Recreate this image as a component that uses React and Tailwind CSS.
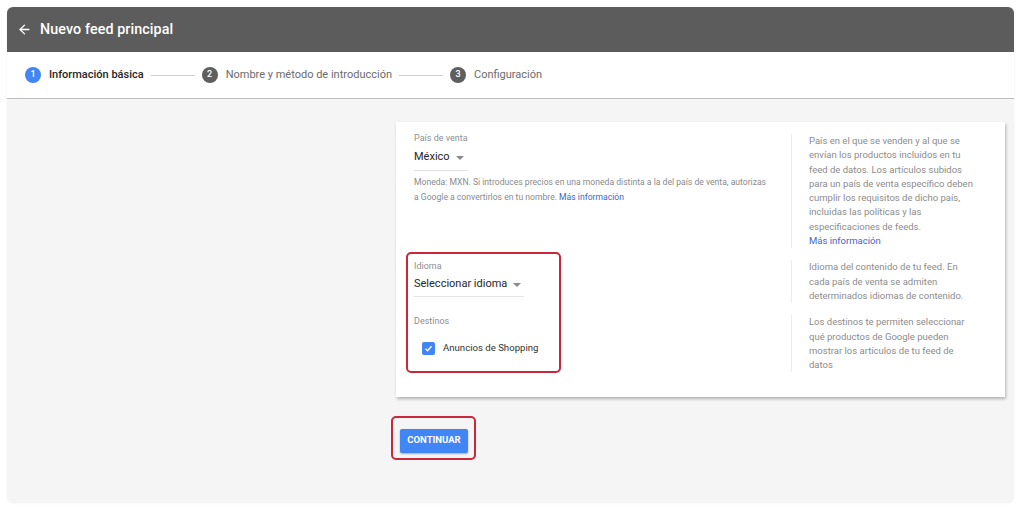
import { ArrowLeft } from 'lucide-react';

const steps = [
  { n: 1, label: 'Información básica', active: true },
  { n: 2, label: 'Nombre y método de introducción' },
  { n: 3, label: 'Configuración' },
];

const Caret = () => (
  <svg width="8" height="4" viewBox="0 0 8 4" className="ml-[6px] mt-[1px]">
    <path d="M0 0 L8 0 L4 4 Z" fill="#8a8a8a" />
  </svg>
);

const HelpBlock = ({ children }) => (
  <div className="border-l border-[#ececec] pl-[17px] pr-[26px] text-[9.5px] leading-[14.3px] text-[#8c8c8c]">
    {children}
  </div>
);

const App = () => {
  return (
    <div className="h-[509px] w-[1024px] bg-white pt-[7px] pl-[7px] pr-[10px] pb-[6px] font-['Roboto','Noto_Sans',sans-serif]">
      <div className="flex h-full flex-col overflow-hidden rounded-[6px] shadow-[0_0_2px_rgba(0,0,0,0.08)]">
        {/* Header */}
        <div className="flex h-[45px] shrink-0 items-center bg-[#5c5c5c] pl-[10px] text-white shadow-[0_2px_3px_rgba(0,0,0,0.25)]">
          <ArrowLeft size={15} strokeWidth={2.2} />
          <h1 className="ml-[8px] text-[14.3px] font-medium tracking-[0.1px]">Nuevo feed principal</h1>
        </div>

        {/* Stepper */}
        <div className="flex h-[47px] shrink-0 items-center border-b border-[#bdbdbd] bg-white pl-[18px]">
          {steps.map((step, i) => (
            <div key={step.n} className="flex items-center">
              <div
                className={`flex h-[16px] w-[16px] items-center justify-center rounded-full text-[9px] font-medium text-white ${
                  step.active ? 'bg-[#4285f4]' : 'bg-[#5f5f5f]'
                }`}
              >
                {step.n}
              </div>
              <span
                className={`ml-[8px] text-[11px] ${
                  step.active ? 'font-medium text-[#262626]' : 'text-[#6b6b6b]'
                }`}
              >
                {step.label}
              </span>
              {i < steps.length - 1 && (
                <div className="mx-[7px] h-px w-[44px] bg-[#d0d0d0]" />
              )}
            </div>
          ))}
        </div>

        {/* Body */}
        <div className="flex-1 bg-[#f5f5f5] pt-[23px] pl-[389px] pr-[9px]">
          <div className="flex bg-white shadow-[1px_2px_3px_rgba(0,0,0,0.28)]">
            {/* Left column */}
            <div className="flex-1 pl-[18px] pt-[10px] pb-[24px]">
              <div className="text-[9px] leading-[13px] text-[#8f8f8f]">País de venta</div>
              <div className="mt-[4px] w-[54px] border-b border-[#e3e3e3] pb-[5px]">
                <div className="flex items-center text-[11px] leading-[16px] text-[#262626]">
                  México
                  <Caret />
                </div>
              </div>
              <p className="mt-[4px] w-[356px] text-[8.6px] leading-[15px] text-[#8a8a8a]">
                Moneda: MXN. Si introduces precios en una moneda distinta a la del país de venta, autorizas a Google a convertirlos en tu nombre.{' '}
                <span className="text-[#4266c4]">Más información</span>
              </p>

              <div className="mt-[47px] ml-[-8px] w-[155px] rounded-[5px] border-2 border-[#c8283a] pl-[6px] pt-[6px] pb-[16px]">
                <div className="text-[9px] leading-[13px] text-[#8f8f8f]">Idioma</div>
                <div className="mt-[3px] w-[110px] border-b border-[#e3e3e3] pb-[4px]">
                  <div className="flex items-center text-[11px] leading-[16px] text-[#262626]">
                    Seleccionar idioma
                    <Caret />
                  </div>
                </div>
                <div className="mt-[18px] text-[9px] leading-[13px] text-[#8f8f8f]">Destinos</div>
                <label className="mt-[13px] ml-[8px] flex items-center">
                  <span className="flex h-[13px] w-[13px] items-center justify-center rounded-[2px] bg-[#4285f4]">
                    <svg width="9" height="9" viewBox="0 0 12 12">
                      <path d="M2 6.3 L4.8 9 L10 3" fill="none" stroke="white" strokeWidth="1.8" />
                    </svg>
                  </span>
                  <span className="ml-[8px] text-[9.6px] text-[#333333]">Anuncios de Shopping</span>
                </label>
              </div>
            </div>

            {/* Right column */}
            <div className="flex w-[214px] flex-col gap-[12px] pt-[12px] pb-[18px]">
              <HelpBlock>
                País en el que se venden y al que se envían los productos incluidos en tu feed de datos. Los artículos subidos para un país de venta específico deben cumplir los requisitos de dicho país, incluidas las políticas y las especificaciones de feeds.
                <br />
                <span className="text-[#4266c4]">Más información</span>
              </HelpBlock>
              <HelpBlock>
                Idioma del contenido de tu feed. En cada país de venta se admiten determinados idiomas de contenido.
              </HelpBlock>
              <HelpBlock>
                Los destinos te permiten seleccionar qué productos de Google pueden mostrar los artículos de tu feed de datos
              </HelpBlock>
            </div>
          </div>

          <div className="mt-[19px] ml-[-5px] inline-block rounded-[5px] border-2 border-[#c8283a] pt-[8px] pl-[7px] pr-[6px] pb-[5px]">
            <button className="h-[24px] w-[68px] rounded-[2px] bg-[#4285f4] text-[9.5px] font-bold text-white shadow-[0_1px_2px_rgba(0,0,0,0.3)]">
              CONTINUAR
            </button>
          </div>
        </div>
      </div>
    </div>
  );
};

export default App;
